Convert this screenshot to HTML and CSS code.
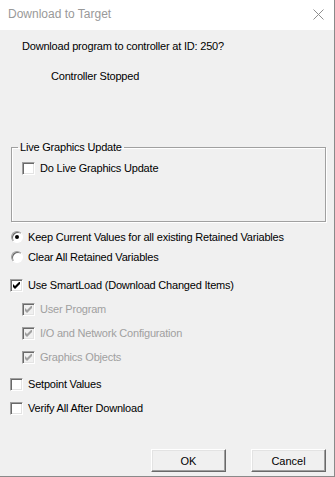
FILE: index.html
```html
<!DOCTYPE html>
<html lang="en">
<head>
<meta charset="UTF-8" />
<meta name="viewport" content="width=device-width, initial-scale=1" />
<title>Download to Target</title>
<link rel="stylesheet" href="styles.css">
</head>
<body>

<div class="dialog" role="dialog" aria-labelledby="dlgTitle">
  <div class="titlebar">
    <span class="title" id="dlgTitle">Download to Target</span>
    <svg class="close" width="11" height="11" viewBox="0 0 11 11" aria-hidden="true">
      <path d="M0.5 0.5 L10.5 10.5 M10.5 0.5 L0.5 10.5" stroke="#8e8e8e" stroke-width="1" fill="none" />
    </svg>
  </div>

  <div class="content">
    <p class="prompt">Download program to controller at ID: 250?</p>
    <p class="state">Controller Stopped</p>

    <!-- ライブ更新グループ -->
    <fieldset class="group">
      <legend>Live Graphics Update</legend>
      <label class="opt sub"><span class="box"></span>Do Live Graphics Update</label>
    </fieldset>

    <div class="radios">
      <label class="opt radio-row"><span class="radio on"></span>Keep Current Values for all existing Retained Variables</label>
      <label class="opt radio-row"><span class="radio"></span>Clear All Retained Variables</label>
    </div>

    <div class="checks">
      <label class="opt"><span class="box"><svg class="tick" viewBox="0 0 7 7"><path d="M0 2 L2 4 L7 -1 L7 2 L2 7 L0 5 Z" /></svg></span>Use SmartLoad (Download Changed Items)</label>
      <label class="opt sub disabled"><span class="box"><svg class="tick" viewBox="0 0 7 7"><path d="M0 2 L2 4 L7 -1 L7 2 L2 7 L0 5 Z" /></svg></span>User Program</label>
      <label class="opt sub disabled"><span class="box"><svg class="tick" viewBox="0 0 7 7"><path d="M0 2 L2 4 L7 -1 L7 2 L2 7 L0 5 Z" /></svg></span>I/O and Network Configuration</label>
      <label class="opt sub disabled"><span class="box"><svg class="tick" viewBox="0 0 7 7"><path d="M0 2 L2 4 L7 -1 L7 2 L2 7 L0 5 Z" /></svg></span>Graphics Objects</label>
      <label class="opt gap"><span class="box"></span>Setpoint Values</label>
      <label class="opt"><span class="box"></span>Verify All After Download</label>
    </div>

    <div class="actions">
      <button class="btn">OK</button>
      <button class="btn">Cancel</button>
    </div>
  </div>
</div>

</body>
</html>
```

FILE: styles.css
```css
body {
  margin: 0;
  background: #fff;
  font-family: 'Liberation Sans', Arial, sans-serif;
  font-size: 11px;
  color: #000;
}
/* ウィンドウ枠 */
.dialog {
  width: 334px;
  height: 476px;
  border-right: 1px solid #8a8a8a;
  border-bottom: 1px solid #8a8a8a;
  background: #f0f0f0;
  display: flex;
  flex-direction: column;
  letter-spacing: -0.2px;
}
.titlebar {
  height: 30px;
  background: #fff;
  display: flex;
  align-items: center;
  justify-content: space-between;
  padding: 0 10px 2px 8px;
  box-sizing: border-box;
  letter-spacing: 0;
}
.title {
  font-size: 12px;
  color: #999;
}
.content {
  padding: 10px 8px 0 10px;
}
p {
  margin: 0;
  line-height: 13px;
}
.prompt {
  padding-left: 12px;
}
.state {
  margin-top: 17px;
  padding-left: 41px;
}
/* グループボックス */
.group {
  margin: 58px 0 0 1px;
  padding: 8px 0 46px 0;
  border: 1px solid #a0a0a0;
  box-shadow: 1px 1px 0 #fff, inset 1px 1px 0 #fff;
  min-width: 0;
}
.group legend {
  margin-left: 6px;
  padding: 0 2px;
  line-height: 13px;
}
.group .opt.sub {
  padding-left: 10px;
  height: 13px;
}
/* オプション行 */
.opt {
  display: flex;
  align-items: center;
  height: 24px;
  line-height: 13px;
}
.opt.sub {
  padding-left: 12px;
}
.opt.disabled {
  color: #a0a0a0;
}
.radios {
  margin-top: 5px;
}
.radio-row {
  height: 20px;
  padding-left: 1px;
}
.checks {
  margin-top: 6px;
}
.opt.gap {
  margin-top: 3px;
}
.box {
  width: 13px;
  height: 13px;
  box-sizing: border-box;
  margin-right: 5px;
  border: 1px solid;
  border-color: #a0a0a0 #fff #fff #a0a0a0;
  box-shadow: inset 1px 1px 0 #696969, inset -1px -1px 0 #e3e3e3;
  background: #fff;
  flex: none;
  display: flex;
  align-items: center;
  justify-content: center;
}
.tick {
  width: 7px;
  height: 7px;
  fill: #000;
}
.disabled .box {
  background: #f0f0f0;
}
.disabled .tick {
  fill: #a0a0a0;
}
.radio {
  width: 12px;
  height: 12px;
  box-sizing: border-box;
  margin-right: 5px;
  border-radius: 50%;
  border: 1px solid;
  border-color: #a0a0a0 #fff #fff #a0a0a0;
  box-shadow: inset 1px 1px 0 #696969;
  background: #fff;
  flex: none;
  position: relative;
}
.radio.on::after {
  content: "";
  position: absolute;
  left: 3px;
  top: 3px;
  width: 4px;
  height: 4px;
  border-radius: 50%;
  background: #000;
}
/* ボタン */
.actions {
  display: flex;
  justify-content: flex-end;
  gap: 25px;
  margin-top: 29px;
}
.btn {
  width: 75px;
  height: 23px;
  font: inherit;
  letter-spacing: 0;
  background: #f0f0f0;
  border: 1px solid;
  border-color: #fff #696969 #696969 #fff;
  box-shadow: inset -1px -1px 0 #a0a0a0, inset 1px 1px 0 #e3e3e3;
  padding: 0;
}
```
